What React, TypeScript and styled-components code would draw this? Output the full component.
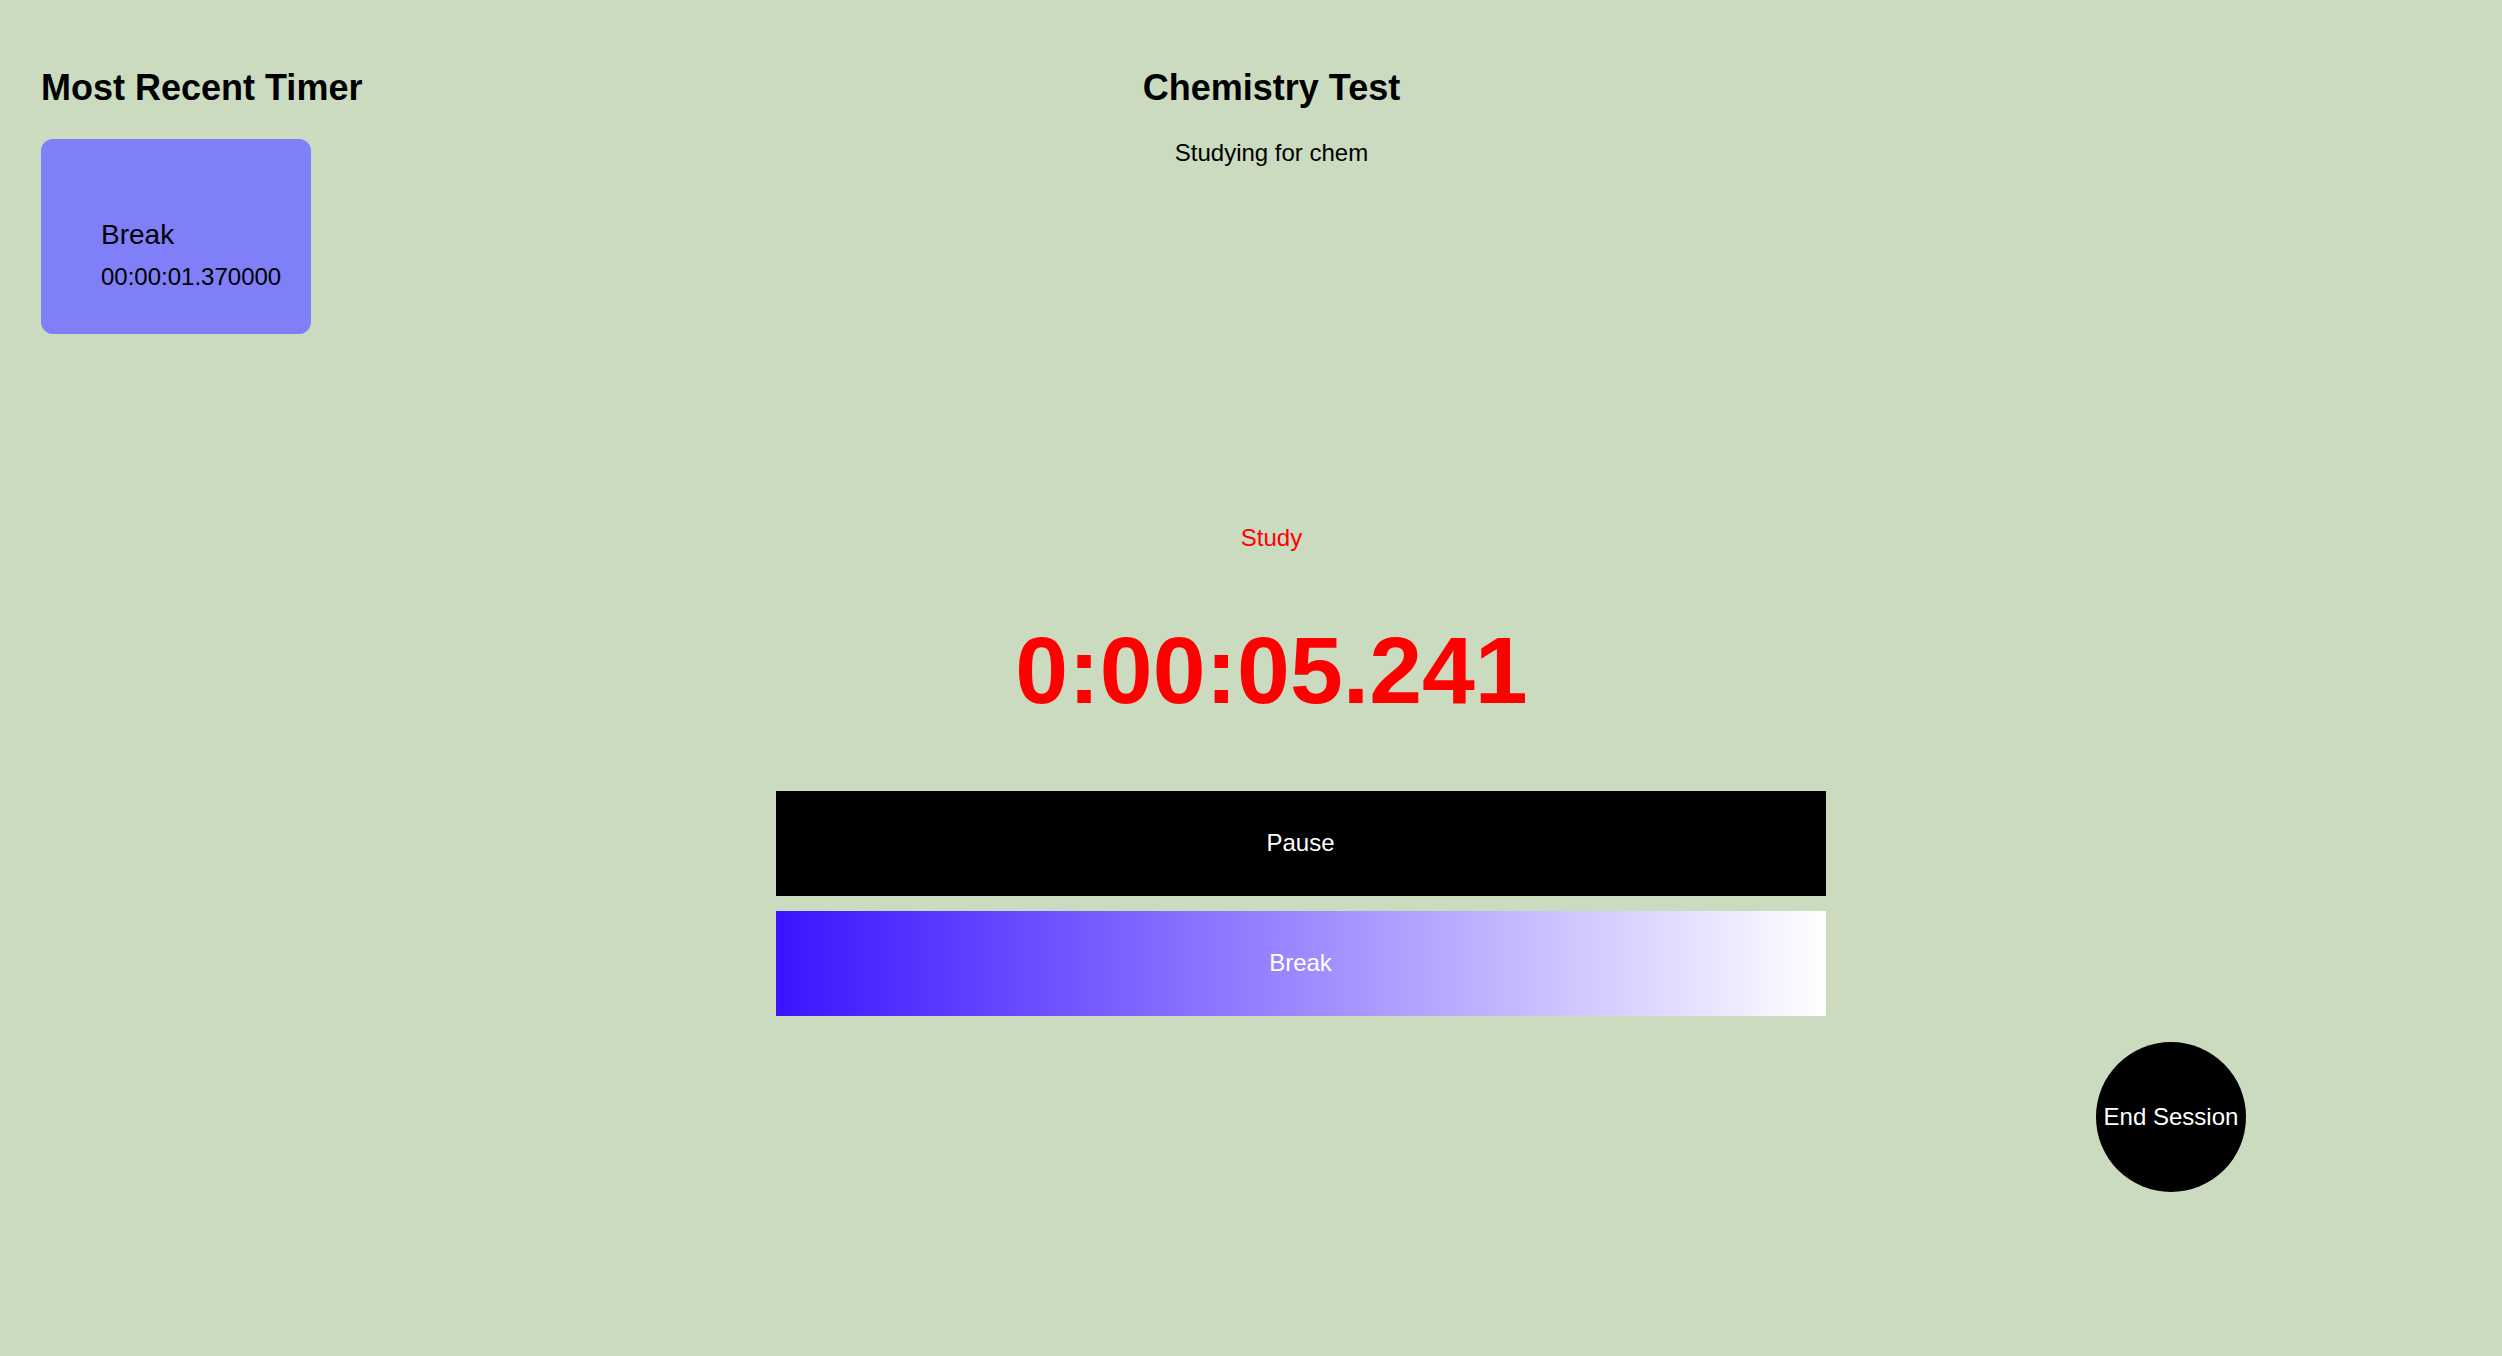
import React from "react";
import styled, { createGlobalStyle } from "styled-components";

const GlobalStyle = createGlobalStyle`
  html, body {
    margin: 0;
    padding: 0;
    background: #cadbc0;
  }
  * { box-sizing: border-box; }
`;

const Page = styled.div`
  min-height: 100vh;
  background: #cadbc0;
  font-family: "Liberation Sans", Arial, sans-serif;
  color: #000;
  padding-top: 67px;
  padding-left: 41px;
  display: flex;
  flex-direction: column;
`;

const TopRow = styled.div`
  display: grid;
  grid-template-columns: 1fr;
`;

const RecentPanel = styled.section`
  grid-area: 1 / 1;
  justify-self: start;
  display: flex;
  flex-direction: column;
  gap: 30px;
`;

const SessionHeader = styled.header`
  grid-area: 1 / 1;
  justify-self: center;
  display: flex;
  flex-direction: column;
  align-items: center;
  gap: 30px;
  align-self: start;
`;

const Heading = styled.h2`
  margin: 0;
  font-size: 36px;
  line-height: 42px;
  font-weight: 700;
`;

const Description = styled.p`
  margin: 0;
  font-size: 24px;
  line-height: 28px;
`;

const TimerCard = styled.div`
  width: 270px;
  background: #7f7ff7;
  border-radius: 12px;
  padding: 80px 16px 43px 60px;
  display: flex;
  flex-direction: column;
  gap: 12px;
`;

const CardTitle = styled.div`
  font-size: 28px;
  line-height: 32px;
`;

const CardTime = styled.div`
  font-size: 24px;
  line-height: 28px;
`;

const TimerSection = styled.main`
  margin-top: 191px;
  display: flex;
  flex-direction: column;
  align-items: center;
`;

const ModeLabel = styled.div`
  color: #ff0000;
  font-size: 24px;
  line-height: 26px;
`;

const Clock = styled.div`
  margin-top: 64px;
  color: #ff0000;
  font-size: 95px;
  line-height: 110px;
  font-weight: 700;
`;

const Controls = styled.div`
  margin-top: 66px;
  margin-left: 58px;
  width: 1050px;
  display: flex;
  flex-direction: column;
  gap: 15px;
`;

const ControlButton = styled.button<{ $variant: "pause" | "break" }>`
  height: 105px;
  width: 100%;
  border: none;
  border-radius: 0;
  padding: 0 0 2px;
  cursor: pointer;
  font-family: "Liberation Sans", Arial, sans-serif;
  font-size: 24px;
  color: #ffffff;
  background: ${(p) =>
    p.$variant === "pause"
      ? "#000000"
      : "linear-gradient(to right, #3a14ff 0%, #ffffff 100%)"};
`;

const FooterRow = styled.div`
  margin-top: 26px;
  display: flex;
  justify-content: flex-end;
  padding-right: 256px;
`;

const EndButton = styled.button`
  width: 150px;
  height: 150px;
  border-radius: 50%;
  border: none;
  background: #000;
  color: #fff;
  font-family: "Liberation Sans", Arial, sans-serif;
  font-size: 24px;
  padding: 0;
  cursor: pointer;
`;

export default function App() {
  return (
    <>
      <GlobalStyle />
      <Page>
        <TopRow>
          <RecentPanel>
            <Heading>Most Recent Timer</Heading>
            <TimerCard>
              <CardTitle>Break</CardTitle>
              <CardTime>00:00:01.370000</CardTime>
            </TimerCard>
          </RecentPanel>
          <SessionHeader>
            <Heading>Chemistry Test</Heading>
            <Description>Studying for chem</Description>
          </SessionHeader>
        </TopRow>
        <TimerSection>
          <ModeLabel>Study</ModeLabel>
          <Clock>0:00:05.241</Clock>
          <Controls>
            <ControlButton $variant="pause">Pause</ControlButton>
            <ControlButton $variant="break">Break</ControlButton>
          </Controls>
        </TimerSection>
        <FooterRow>
          <EndButton>End Session</EndButton>
        </FooterRow>
      </Page>
    </>
  );
}
